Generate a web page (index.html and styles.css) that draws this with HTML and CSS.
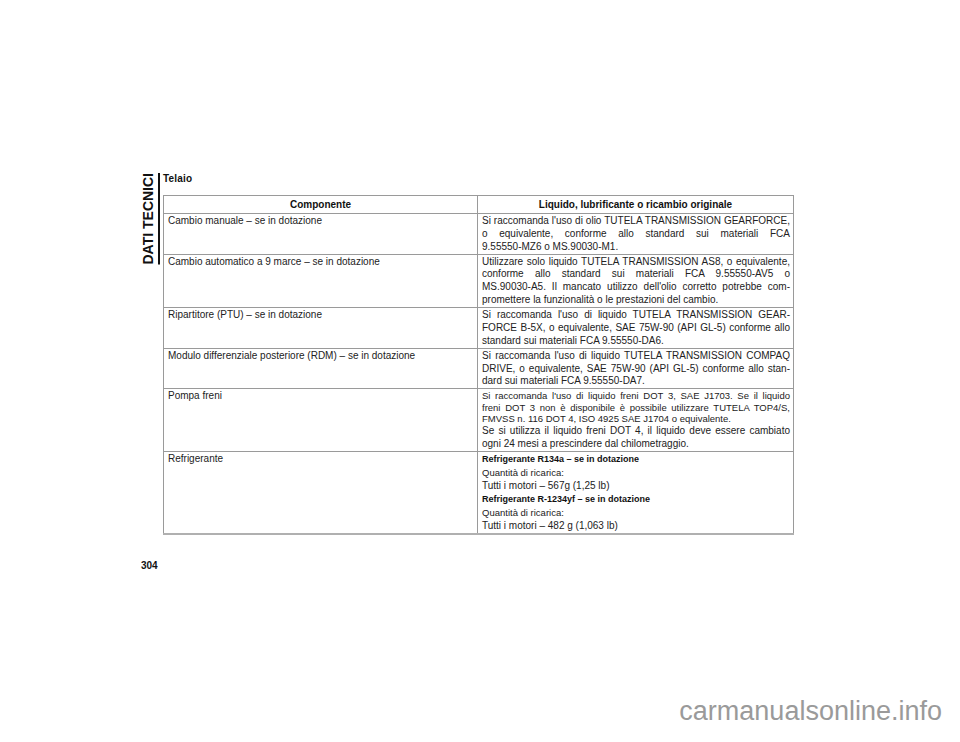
FILE: index.html
```html
<!DOCTYPE html>
<html lang="it">
<head>
<meta charset="utf-8">
<title>Dati tecnici - Telaio</title>
<link rel="stylesheet" href="styles.css">
</head>
<body>
<div class="page">
  <aside class="gutter">
    <div class="side-title">DATI TECNICI</div>
    <div class="pageno">304</div>
  </aside>
  <main class="content">
    <h2 class="section">Telaio</h2>
    <table class="spec">
      <colgroup><col class="c1"><col class="c2"></colgroup>
      <thead>
        <tr><th>Componente</th><th>Liquido, lubrificante o ricambio originale</th></tr>
      </thead>
      <tbody>
        <tr>
          <td>Cambio manuale – se in dotazione</td>
          <td>
            <span class="ln j">Si raccomanda l'uso di olio TUTELA TRANSMISSION GEARFORCE,</span>
            <span class="ln j">o equivalente, conforme allo standard sui materiali FCA</span>
            <span class="ln">9.55550-MZ6 o MS.90030-M1.</span>
          </td>
        </tr>
        <tr>
          <td>Cambio automatico a 9 marce – se in dotazione</td>
          <td>
            <span class="ln j">Utilizzare solo liquido TUTELA TRANSMISSION AS8, o equivalente,</span>
            <span class="ln j">conforme allo standard sui materiali FCA 9.55550-AV5 o</span>
            <span class="ln j">MS.90030-A5. Il mancato utilizzo dell'olio corretto potrebbe com-</span>
            <span class="ln">promettere la funzionalità o le prestazioni del cambio.</span>
          </td>
        </tr>
        <tr>
          <td>Ripartitore (PTU) – se in dotazione</td>
          <td>
            <span class="ln j">Si raccomanda l'uso di liquido TUTELA TRANSMISSION GEAR-</span>
            <span class="ln j">FORCE B-5X, o equivalente, SAE 75W-90 (API GL-5) conforme allo</span>
            <span class="ln">standard sui materiali FCA 9.55550-DA6.</span>
          </td>
        </tr>
        <tr>
          <td>Modulo differenziale posteriore (RDM) – se in dotazione</td>
          <td>
            <span class="ln j">Si raccomanda l'uso di liquido TUTELA TRANSMISSION COMPAQ</span>
            <span class="ln j">DRIVE, o equivalente, SAE 75W-90 (API GL-5) conforme allo stan-</span>
            <span class="ln">dard sui materiali FCA 9.55550-DA7.</span>
          </td>
        </tr>
        <tr>
          <td>Pompa freni</td>
          <td>
            <span class="ln j sm">Si raccomanda l'uso di liquido freni DOT 3, SAE J1703. Se il liquido</span>
            <span class="ln j sm">freni DOT 3 non è disponibile è possibile utilizzare TUTELA TOP4/S,</span>
            <span class="ln sm">FMVSS n. 116 DOT 4, ISO 4925 SAE J1704 o equivalente.</span>
            <span class="ln j">Se si utilizza il liquido freni DOT 4, il liquido deve essere cambiato</span>
            <span class="ln">ogni 24 mesi a prescindere dal chilometraggio.</span>
          </td>
        </tr>
        <tr class="last">
          <td>Refrigerante</td>
          <td>
            <span class="ln b">Refrigerante R134a – se in dotazione</span>
            <span class="ln q">Quantità di ricarica:</span>
            <span class="ln">Tutti i motori – 567g (1,25 lb)</span>
            <span class="ln b">Refrigerante R-1234yf – se in dotazione</span>
            <span class="ln q">Quantità di ricarica:</span>
            <span class="ln">Tutti i motori – 482 g (1,063 lb)</span>
          </td>
        </tr>
      </tbody>
    </table>
  </main>
</div>
<footer class="wm">carmanualsonline.info</footer>
</body>
</html>
```

FILE: styles.css
```css
html, body {
  margin: 0;
  padding: 0;
  background: #ffffff;
}
body {
  width: 960px;
  height: 742px;
  display: flex;
  flex-direction: column;
  font-family: "Liberation Sans", Arial, sans-serif;
  color: #1a1a1a;
  overflow: hidden;
}
.page {
  display: flex;
  padding: 172px 0 0 141px;
}
.gutter {
  width: 22px;
  display: flex;
  flex-direction: column;
}
.side-title {
  writing-mode: vertical-rl;
  transform: rotate(180deg);
  font-weight: 700;
  font-size: 14px;
  line-height: 14px;
  text-decoration: underline;
  text-decoration-thickness: 2px;
  text-underline-offset: 2px;
  color: #111;
  margin-top: 1px;
  align-self: flex-start;
}
.pageno {
  margin-top: 295px;
  font-weight: 700;
  font-size: 10px;
  line-height: 12px;
  color: #111;
}
.content {
  width: 630px;
}
.section {
  margin: 0 0 9px 0;
  font-size: 10px;
  line-height: 14px;
  font-weight: 700;
  letter-spacing: 0.2px;
  color: #111;
}
.spec {
  width: 630px;
  border-collapse: collapse;
  table-layout: fixed;
}
.spec .c1 { width: 314px; }
.spec .c2 { width: 316px; }
.spec th, .spec td {
  border: 1px solid #9a9a9a;
  vertical-align: top;
  text-align: left;
}
.spec th {
  font-size: 10px;
  font-weight: 700;
  line-height: 15px;
  padding: 1px 4px 1px 4px;
  text-align: center;
  color: #111;
}
.spec td {
  font-size: 10px;
  line-height: 12.8px;
  padding: 1px 3px 0.25px 4px;
  color: #222;
}
.spec tr.last td {
  border-bottom: 2px solid #b0b0b0;
}
.ln {
  display: block;
  white-space: nowrap;
}
.ln.j {
  text-align: justify;
  text-align-last: justify;
}
.ln.sm {
  font-size: 9.5px;
  line-height: 11.5px;
}
.ln.b {
  font-weight: 700;
  font-size: 9px;
  line-height: 13.5px;
  color: #111;
}
.ln.q {
  font-size: 9.5px;
  line-height: 13.5px;
}
.wm {
  margin-top: auto;
  padding: 0 18px 16px 0;
  text-align: right;
  font-family: "Liberation Sans", Arial, sans-serif;
  font-size: 27px;
  line-height: 30px;
  color: #9a9a9a;
}
```
